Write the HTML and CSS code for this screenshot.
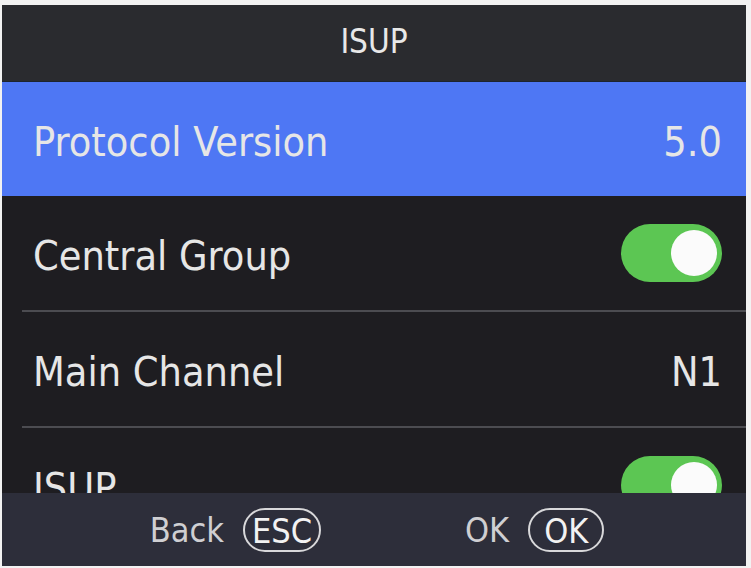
FILE: index.html
```html
<!DOCTYPE html>
<html lang="en">
<head>
    <meta charset="UTF-8">
    <meta name="viewport" content="width=device-width, initial-scale=1.0">
    <title>ISUP</title>
    <link rel="stylesheet" href="styles.css">
</head>
<body>
    <div class="screen">
        <div class="title">ISUP</div>
        <div class="list">
            <div class="row selected">
                <span class="label">Protocol Version</span>
                <span class="label">5.0</span>
            </div>
            <div class="row">
                <span class="label">Central Group</span>
                <span class="toggle on"><span class="knob"></span></span>
            </div>
            <div class="row">
                <span class="label">Main Channel</span>
                <span class="label">N1</span>
            </div>
            <div class="row">
                <span class="label">ISUP</span>
                <span class="toggle on"><span class="knob"></span></span>
            </div>
        </div>
        <div class="footer">
            <div class="action">Back <span class="key">ESC</span></div>
            <div class="action">OK <span class="key wide">OK</span></div>
        </div>
    </div>
</body>
</html>
```

FILE: styles.css
```css
body{
    margin: 0;
    background-color: #f2f2f2;
    font-family: "DejaVu Sans", sans-serif;
    font-stretch: condensed;
}
.screen{
    margin: 5px 0 0 2px;
    width: 744px;
    height: 561px;
    display: flex;
    flex-direction: column;
    background-color: #1e1d21;
    overflow: hidden;
}
.title{
    height: 77px;
    flex-shrink: 0;
    background-color: #2a2b2f;
    border-bottom: 1px solid #1c2430;
    color: #e8e8e8;
    font-size: 33px;
    display: flex;
    align-items: center;
    justify-content: center;
    padding-bottom: 4px;
    box-sizing: border-box;
}
.list{
    flex: 1;
    overflow: hidden;
}
.row{
    height: 114px;
    margin-left: 20px;
    padding: 0 24px 0 11px;
    display: flex;
    align-items: center;
    justify-content: space-between;
    border-bottom: 2px solid #4c4c51;
    color: #e6e6e6;
    font-size: 41px;
}
.row.selected{
    margin-left: 0;
    padding-left: 31px;
    background-color: #4e77f4;
    border-bottom: none;
}
.label{
    padding-top: 6px;
}
.toggle{
    width: 101px;
    height: 58px;
    border-radius: 29px;
    background-color: #5cc653;
    display: flex;
    align-items: center;
    justify-content: flex-end;
    padding: 0 5px;
    box-sizing: border-box;
}
.knob{
    width: 46px;
    height: 46px;
    border-radius: 50%;
    background-color: #fbfbfb;
}
.footer{
    height: 73px;
    flex-shrink: 0;
    background-color: #2d2e3a;
    display: flex;
    justify-content: center;
    align-items: center;
    gap: 144px;
    padding-left: 6px;
    color: #cfcfd2;
    font-size: 34px;
}
.action{
    display: flex;
    align-items: center;
    gap: 19px;
}
.key{
    border: 2px solid #d8d8da;
    border-radius: 22px;
    padding: 3px 7px 1px;
    color: #f2f2f2;
    font-size: 34px;
    line-height: 36px;
}
.key.wide{
    padding: 3px 14px 1px;
}
```
